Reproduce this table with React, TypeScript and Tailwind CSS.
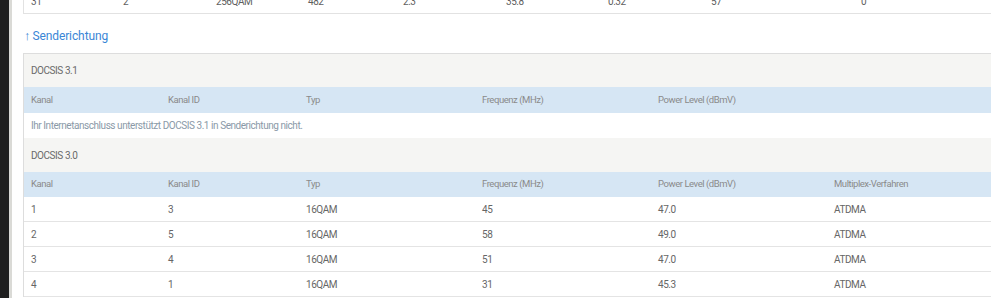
import React from "react";

const cols = ["w-[137px]", "w-[138px]", "w-[176px]", "w-[176px]", "w-[176px]", "flex-1"];

function Row({ cells, className = "" }: { cells: string[]; className?: string }) {
  return (
    <div className={`flex items-center ${className}`}>
      {cells.map((c, i) => (
        <div key={i} className={`${cols[i]} shrink-0 pl-[7px] whitespace-nowrap`}>
          {c}
        </div>
      ))}
    </div>
  );
}

export default function App() {
  const topCells = ["31", "2", "256QAM", "482", "2.3", "35.8", "0.32", "57", "0"];
  const topW = ["w-[92px]", "w-[93px]", "w-[92px]", "w-[95px]", "w-[103px]", "w-[102px]", "w-[103px]", "w-[150px]", "flex-1"];
  const rows = [
    ["1", "3", "16QAM", "45", "47.0", "ATDMA"],
    ["2", "5", "16QAM", "58", "49.0", "ATDMA"],
    ["3", "4", "16QAM", "51", "47.0", "ATDMA"],
    ["4", "1", "16QAM", "31", "45.3", "ATDMA"],
  ];
  return (
    <div
      className="flex w-[991px] h-[298px] overflow-hidden bg-white text-[10px] tracking-[-0.45px] text-[#666]"
      style={{ fontFamily: "Roboto, 'Liberation Sans', sans-serif" }}
    >
      <div className="w-[9px] shrink-0 bg-[#1f1f1f]" />
      <div className="w-[3px] shrink-0 bg-[#dadad6]" />
      <div className="flex-1 min-w-0 pl-[11px] overflow-hidden">
        <div className="w-[1100px]">
          {/* previous table tail */}
          <div className="-mt-[11px] flex h-[25px] items-center border-b border-l border-[#e2e2e2] text-[#606060]">
            {topCells.map((c, i) => (
              <div key={i} className={`${topW[i]} shrink-0 pl-[7px]`}>
                {c}
              </div>
            ))}
          </div>
          <div className="h-[39px] pt-[4px] flex items-center pl-[1px] text-[12px] tracking-[-0.1px] text-[#3a86d6]">
            <span className="mr-[2px] text-[13px]">↑</span>
            <span>Senderichtung</span>
          </div>
          <div className="border-l border-t border-[#dddddd]">
            <div className="h-[33px] flex items-center pl-[7px] bg-[#f5f5f3] text-[#6a6a6a]">DOCSIS 3.1</div>
            <Row
              className="h-[26px] bg-[#d6e6f4] text-[#8a8a8a] text-[9.5px]"
              cells={["Kanal", "Kanal ID", "Typ", "Frequenz (MHz)", "Power Level (dBmV)", ""]}
            />
            <div className="h-[25px] flex items-center pl-[7px] text-[#8a99a7]">
              Ihr Internetanschluss unterstützt DOCSIS 3.1 in Senderichtung nicht.
            </div>
            <div className="h-[34px] flex items-center pl-[7px] bg-[#f5f5f3] text-[#6a6a6a]">DOCSIS 3.0</div>
            <Row
              className="h-[25px] bg-[#d6e6f4] text-[#8a8a8a] text-[9.5px]"
              cells={["Kanal", "Kanal ID", "Typ", "Frequenz (MHz)", "Power Level (dBmV)", "Multiplex-Verfahren"]}
            />
            {rows.map((r, i) => (
              <Row key={i} className="h-[25px] border-b border-[#e4e4e4] text-[#666]" cells={r} />
            ))}
          </div>
        </div>
      </div>
    </div>
  );
}
